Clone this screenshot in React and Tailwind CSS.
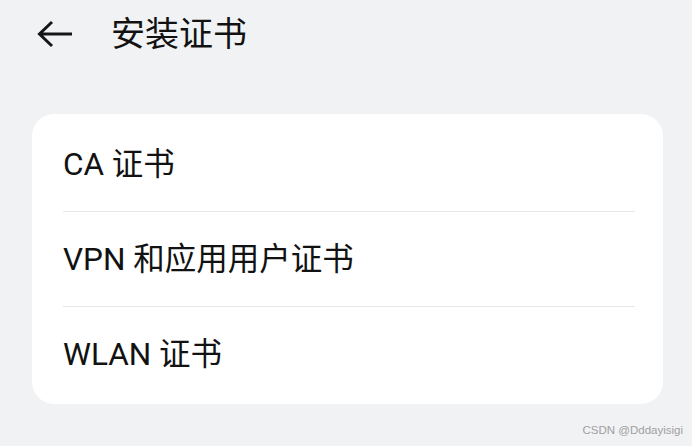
import React from 'react';

const items = ['CA 证书', 'VPN 和应用用户证书', 'WLAN 证书'];

export default function App() {
  return (
    <div
      className="relative w-[692px] h-[446px] bg-[#f1f2f4] text-[#121212] overflow-hidden"
      style={{ fontFamily: 'Roboto, "Noto Sans CJK SC", sans-serif' }}
    >
      {/* Top bar */}
      <header className="flex items-center h-[67px] pl-[37px]">
        <svg width="36" height="28" viewBox="0 0 36 28" className="shrink-0">
          <path d="M2 14 H35 M15 2 L2.5 14 L15 26" fill="none" stroke="#161616" strokeWidth="3" strokeLinecap="butt" strokeLinejoin="miter" />
        </svg>
        <h1 className="ml-[38px] text-[34px] font-normal leading-none">安装证书</h1>
      </header>

      {/* Card */}
      <div className="mx-[32px] mt-[47px] w-[631px] rounded-[22px] bg-white pt-[3px] pb-[3px]">
        {items.map((label, i) => (
          <div key={label} className="pl-[31px] pr-[28px]">
            <div className="flex items-center h-[94px] pt-[2px] text-[31.5px] font-normal leading-none">
              {label}
            </div>
            {i < items.length - 1 && <div className="h-px bg-[#e6e6e8]" />}
          </div>
        ))}
      </div>

      <div className="absolute right-[9px] bottom-[7px] text-[11.5px] text-[#a0a0a0]" style={{ fontFamily: '"Liberation Sans", sans-serif' }}>
        CSDN @Dddayisigi
      </div>
    </div>
  );
}
